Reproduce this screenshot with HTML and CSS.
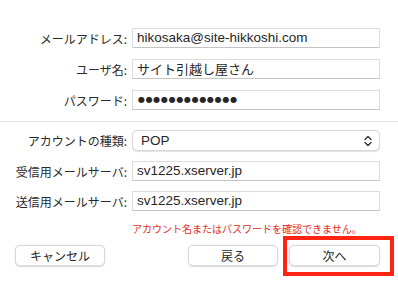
FILE: index.html
```html
<!DOCTYPE html>
<html lang="ja">
<head>
<meta charset="utf-8">
<link rel="stylesheet" href="styles.css">
</head>
<body>
<div class="dialog">
  <div class="form">
    <label class="lbl">メールアドレス:</label>
    <div class="field">hikosaka@site-hikkoshi.com</div>
    <label class="lbl">ユーザ名:</label>
    <div class="field jp">サイト引越し屋さん</div>
    <label class="lbl">パスワード:</label>
    <div class="field dots">●●●●●●●●●●●●●</div>
  </div>
  <div class="sep"></div>
  <div class="form form2">
    <label class="lbl">アカウントの種類:</label>
    <div class="select"><span>POP</span>
      <svg class="chev" width="8" height="12" viewBox="0 0 8 12"><path d="M1 4.5 L4 1.5 L7 4.5 M1 7.5 L4 10.5 L7 7.5" fill="none" stroke="#333" stroke-width="1.4" stroke-linecap="round" stroke-linejoin="round"/></svg>
    </div>
    <label class="lbl">受信用メールサーバ:</label>
    <div class="field">sv1225.xserver.jp</div>
    <label class="lbl">送信用メールサーバ:</label>
    <div class="field">sv1225.xserver.jp</div>
  </div>
  <div class="error">アカウント名またはパスワードを確認できません。</div>
  <div class="buttons">
    <button class="btn cancel">キャンセル</button>
    <button class="btn back">戻る</button>
    <div class="next-wrap">
      <button class="btn next">次へ</button>
      <div class="highlight"></div>
    </div>
  </div>
</div>
</body>
</html>
```
FILE: styles.css
```css
html, body {
  margin: 0;
  padding: 0;
  background: #ffffff;
}
body {
  width: 398px;
  height: 285px;
  overflow: hidden;
  font-family: "Liberation Sans", "Noto Sans CJK JP", sans-serif;
  color: #262626;
}
.dialog {
  padding-top: 28px;
}
.form {
  display: grid;
  grid-template-columns: 127px 248px;
  column-gap: 5px;
  row-gap: 11px;
  align-items: center;
}
.form2 {
  row-gap: 10px;
}
.lbl {
  font-family: "Noto Sans CJK JP", sans-serif;
  font-size: 12px;
  text-align: right;
  color: #2a2a2a;
  white-space: nowrap;
}
.field {
  box-sizing: border-box;
  height: 20px;
  border: 1px solid #dcdcdc;
  border-bottom-color: #c4c4c4;
  background: #fff;
  font-size: 13.5px;
  line-height: 18px;
  padding-left: 4px;
  white-space: nowrap;
}
.field.jp {
  font-family: "Noto Sans CJK JP", sans-serif;
  font-size: 13px;
}
.dots {
  font-family: "DejaVu Sans", sans-serif;
  font-size: 8px;
  letter-spacing: 0.7px;
  padding-left: 5px;
}
.sep {
  height: 1px;
  background: #e3e3e3;
  margin: 11px 0 8px;
}
.select {
  box-sizing: border-box;
  height: 21px;
  border: 1px solid #d8d8d8;
  border-radius: 5px;
  box-shadow: 0 0.5px 1px rgba(0,0,0,0.12);
  background: #fff;
  display: flex;
  align-items: center;
  justify-content: space-between;
  padding: 0 7px 0 8px;
  font-size: 13.5px;
}
.chev {
  display: block;
}
.error {
  font-family: "Noto Sans CJK JP", sans-serif;
  font-size: 10px;
  color: #e3291d;
  margin: 11px 0 0 132px;
  line-height: 14px;
}
.buttons {
  display: flex;
  align-items: center;
  margin-top: 9px;
  padding-left: 15px;
}
.btn {
  box-sizing: border-box;
  width: 90px;
  height: 21px;
  background: #fff;
  border: 1px solid #d9d9d9;
  border-radius: 5px;
  box-shadow: 0 0.5px 1.5px rgba(0,0,0,0.15);
  font-family: "Noto Sans CJK JP", sans-serif;
  font-size: 12px;
  color: #262626;
  padding: 0;
  line-height: 19px;
}
.back {
  margin-left: 83px;
}
.next-wrap {
  position: relative;
  margin-left: 11px;
}
.next {
  width: 91px;
  display: block;
}
.highlight {
  position: absolute;
  left: -6px;
  top: -9px;
  right: -14px;
  bottom: -10px;
  border: 4.5px solid #ff2412;
}
```
